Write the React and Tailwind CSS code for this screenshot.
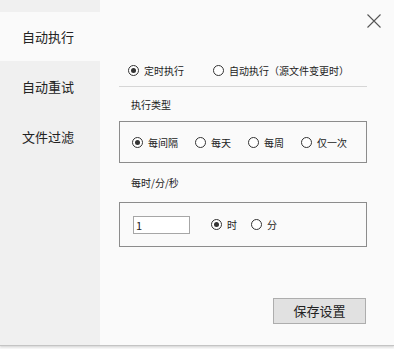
import { useState } from "react";

const Radio = ({ checked, label, onClick, className = "" }) => (
    <div onClick={onClick} className={`flex items-center gap-[5px] cursor-default ${className}`}>
        <span className="w-[11px] h-[11px] rounded-full border border-[#333] bg-white flex items-center justify-center">
            {checked && <span className="w-[5px] h-[5px] rounded-full bg-[#333]" />}
        </span>
        <span>{label}</span>
    </div>
)

export default function App() {
    const [tab, setTab] = useState(0)
    const [mode, setMode] = useState("timer")
    const [kind, setKind] = useState("interval")
    const [unit, setUnit] = useState("hour")
    const [value, setValue] = useState("1")
    const tabs = ["自动执行", "自动重试", "文件过滤"]

    return (
        <div className="w-[394px] h-[349px] bg-[#f7f7f7] text-[#222]" style={{ fontFamily: '"Noto Sans CJK SC", "Noto Sans", sans-serif' }}>
            <div className="h-[346px] flex border-b border-[#c4c4c4] shadow-[0_1px_2px_rgba(0,0,0,0.15)]">
                <div className="w-[100px] bg-[#f0f0f0] pt-[12px] flex flex-col">
                    {tabs.map((t, i) => (
                        <div key={t} onClick={() => setTab(i)}
                            className={`h-[49px] mb-[1px] flex items-center pl-[22px] text-[13px] ${tab === i ? "bg-[#fafafa]" : ""}`}>
                            {t}
                        </div>
                    ))}
                </div>
                <div className="flex-1 bg-[#fafafa] pl-[19px] pr-[27px] flex flex-col text-[10px]">
                    <div className="h-[58px] flex justify-end items-start pt-[14px] -mr-[14px]">
                        <svg width="14" height="14" viewBox="0 0 14 14" className="text-[#555]">
                            <path d="M0.5 0.5 L13.5 13.5 M13.5 0.5 L0.5 13.5" stroke="currentColor" strokeWidth="1.1" fill="none" />
                        </svg>
                    </div>
                    <div className="h-[24px] flex items-center pl-[9px]">
                        <Radio checked={mode === "timer"} label="定时执行" onClick={() => setMode("timer")} />
                        <Radio checked={mode === "auto"} label="自动执行（源文件变更时）" onClick={() => setMode("auto")} className="ml-[29px]" />
                    </div>
                    <div className="mt-[4px] border-t border-[#d6d6d6]" />
                    <div className="h-[34px] flex items-center pl-[12px]">执行类型</div>
                    <div className="h-[42px] border border-[#8c8c8c] flex items-center pl-[12px]">
                        <Radio checked={kind === "interval"} label="每间隔" onClick={() => setKind("interval")} />
                        <Radio checked={kind === "day"} label="每天" onClick={() => setKind("day")} className="ml-[17px]" />
                        <Radio checked={kind === "week"} label="每周" onClick={() => setKind("week")} className="ml-[17px]" />
                        <Radio checked={kind === "once"} label="仅一次" onClick={() => setKind("once")} className="ml-[17px]" />
                    </div>
                    <div className="h-[39px] flex items-center pl-[12px]">每时/分/秒</div>
                    <div className="h-[45px] border border-[#8c8c8c] flex items-center pl-[13px]">
                        <input value={value} onChange={(e) => setValue(e.target.value)}
                            className="w-[57px] h-[18px] border border-[#a6a6a6] bg-white px-[2px] text-[11px] outline-none" />
                        <Radio checked={unit === "hour"} label="时" onClick={() => setUnit("hour")} className="ml-[21px]" />
                        <Radio checked={unit === "min"} label="分" onClick={() => setUnit("min")} className="ml-[14px]" />
                    </div>
                    <div className="flex justify-end mt-[51px] mr-[1px]">
                        <button className="w-[93px] h-[26px] bg-[#e1e1e1] border border-[#adadad] text-[13px] text-[#222]">保存设置</button>
                    </div>
                </div>
            </div>
        </div>
    )
}
